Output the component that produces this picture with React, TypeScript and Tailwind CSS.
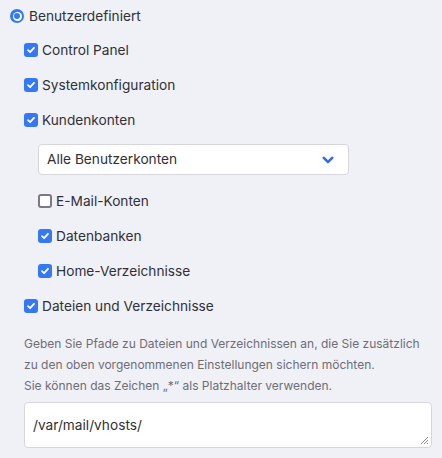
import React from 'react';

function Check({ checked }: { checked: boolean }) {
  if (!checked) {
    return (
      <span className="w-[14px] h-[14px] shrink-0 rounded-[3px] border-2 border-[#7a7a82] bg-white" />
    );
  }
  return (
    <span className="w-[14px] h-[14px] shrink-0 rounded-[3px] bg-[#3478f6] flex items-center justify-center">
      <svg width="10" height="10" viewBox="0 0 10 10" fill="none">
        <path
          d="M2 5.2 L4.1 7.2 L8 2.8"
          stroke="white"
          strokeWidth="1.8"
          strokeLinecap="round"
          strokeLinejoin="round"
        />
      </svg>
    </span>
  );
}

function Row({
  checked,
  label,
  indent,
}: {
  checked: boolean;
  label: string;
  indent?: boolean;
}) {
  return (
    <div className={`flex items-center gap-[4px] h-[20px] ${indent ? 'pl-[38px]' : 'pl-[24px]'}`}>
      <Check checked={checked} />
      <span className="text-[13.7px] text-[#303036]">{label}</span>
    </div>
  );
}

export default function App() {
  return (
    <div
      className="w-[442px] h-[458px] bg-[#f0f0f7] overflow-hidden"
      style={{ fontFamily: 'Inter, "Noto Sans", sans-serif' }}
    >
      <div className="flex items-center gap-[5px] pl-[10px] pt-[6px] h-[26px]">
        <span className="w-[14px] h-[14px] rounded-full bg-[#3478f6] flex items-center justify-center">
          <span className="w-[9px] h-[9px] rounded-full bg-white flex items-center justify-center">
            <span className="w-[6px] h-[6px] rounded-full bg-[#3478f6]" />
          </span>
        </span>
        <span className="text-[13.7px] text-[#303036]">Benutzerdefiniert</span>
      </div>

      <div className="mt-[14px] flex flex-col gap-[15px]">
        <Row checked label="Control Panel" />
        <Row checked label="Systemkonfiguration" />
        <Row checked label="Kundenkonten" />
      </div>

      <div className="ml-[38px] mt-[14px] w-[311px] h-[31px] bg-white border border-[#d6d6dc] rounded-[4px] flex items-center justify-between pl-[8px] pr-[14px]">
        <span className="text-[13.7px] text-[#303036]">Alle Benutzerkonten</span>
        <svg width="12" height="8" viewBox="0 0 12 8" fill="none">
          <path
            d="M1.8 1.8 L6 6 L10.2 1.8"
            stroke="#3a6fd8"
            strokeWidth="2.6"
            strokeLinecap="round"
            strokeLinejoin="round"
          />
        </svg>
      </div>

      <div className="mt-[16px] flex flex-col gap-[15px]">
        <Row indent checked={false} label="E-Mail-Konten" />
        <Row indent checked label="Datenbanken" />
        <Row indent checked label="Home-Verzeichnisse" />
        <Row checked label="Dateien und Verzeichnisse" />
      </div>

      <p className="mt-[17px] pl-[24px] pr-[8px] text-[12px] leading-[21px] text-[#6e6e76]">
        Geben Sie Pfade zu Dateien und Verzeichnissen an, die Sie zusätzlich zu den oben
        vorgenommenen Einstellungen sichern möchten.
        <br />
        Sie können das Zeichen „*“ als Platzhalter verwenden.
      </p>

      <div className="ml-[24px] mt-[6px] w-[408px] h-[46px] bg-white border border-[#d6d6dc] rounded-[4px] relative px-[8px] pt-[9px]">
        <span className="text-[13.7px] text-[#303036]">/var/mail/vhosts/</span>
        <svg
          className="absolute right-[2px] bottom-[2px]"
          width="10"
          height="10"
          viewBox="0 0 10 10"
        >
          <path d="M9 2 L2 9 M9 5 L5 9 M9 8 L8 9" stroke="#8a8a90" strokeWidth="1" />
        </svg>
      </div>
    </div>
  );
}
